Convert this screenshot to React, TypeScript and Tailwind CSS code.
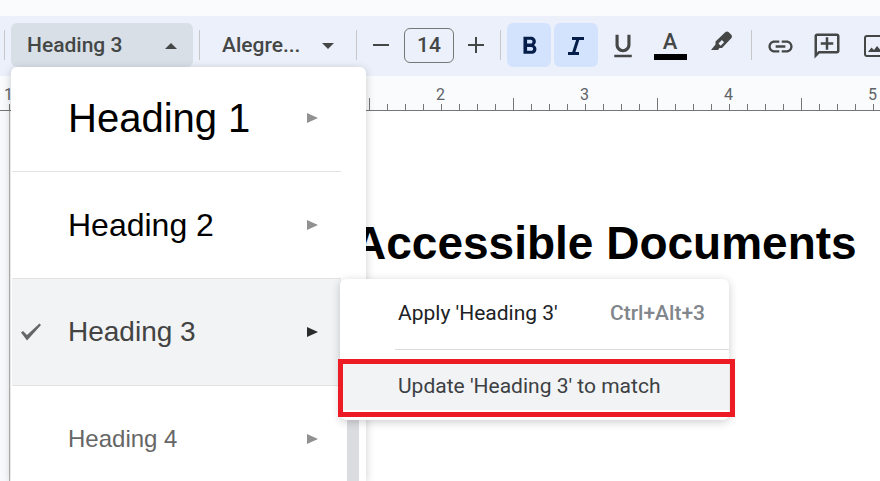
import React from "react";
import {
  MdFormatBold,
  MdFormatUnderlined,
  MdLink,
  MdOutlineAddComment,
} from "react-icons/md";

const headings = [
  { label: "Heading 1", text: "text-[40px] text-black", active: false },
  { label: "Heading 2", text: "text-[32px] text-black", active: false },
  { label: "Heading 3", text: "text-[28px] text-[#434343]", active: true },
  { label: "Heading 4", text: "text-[24px] text-[#666666]", active: false },
];

// Inch labels, counted from the left margin in both directions
const inches = ["1", "", "1", "2", "3", "4", "5"];

function Separator() {
  return <div className="h-[30px] w-px shrink-0 bg-[#c7c7c7]" />;
}

function Ruler() {
  return (
    <div className="h-[35px] overflow-hidden border-b border-[#747775] bg-[#f9fbfd]">
      <div className="flex h-[27px] items-end pl-1">
        {inches.map((n, i) => (
          <span
            key={i}
            className="w-36 shrink-0 text-base leading-4 text-[#5f6368]"
          >
            {n}
          </span>
        ))}
      </div>
      {/* Eighth-inch ticks, taller on the half inch */}
      <div className="-mt-[5px] flex h-3 items-end pl-[9px]">
        {Array.from({ length: 120 }, (_, i) => (
          <span
            key={i}
            className={
              i % 8 === 4
                ? "h-3 w-[18px] shrink-0 border-l border-[#747775]"
                : "h-1.5 w-[18px] shrink-0 border-l border-[#747775]"
            }
          />
        ))}
      </div>
    </div>
  );
}

function Toolbar() {
  return (
    <div className="flex h-[60px] items-center gap-1.5 overflow-hidden bg-[#ecf0fa] pb-0.5 pl-1 text-[#444746]">
      <Separator />
      <button
        type="button"
        aria-expanded="true"
        className="flex h-11 w-[182px] shrink-0 items-center justify-between rounded-md bg-[#d8dfe7] px-4 pt-0.5 text-[21px] font-medium"
      >
        Heading 3
        <svg width="12" height="6" viewBox="0 0 12 6" fill="currentColor">
          <path d="M6 0l6 6H0z" />
        </svg>
      </button>
      <Separator />
      <button
        type="button"
        className="flex h-11 w-36 shrink-0 items-center justify-between px-4 pt-0.5 text-[21px] font-medium"
      >
        Alegre...
        <svg width="12" height="6" viewBox="0 0 12 6" fill="currentColor">
          <path d="M0 0h12L6 6z" />
        </svg>
      </button>
      <Separator />
      <button
        type="button"
        aria-label="Decrease font size"
        className="flex h-11 w-[35px] shrink-0 items-center justify-center"
      >
        <svg width="16" height="16" viewBox="0 0 16 16" fill="currentColor">
          <path d="M0 7h16v2H0z" />
        </svg>
      </button>
      <input
        type="text"
        aria-label="Font size"
        defaultValue="14"
        className="h-[35px] w-[50px] shrink-0 rounded-md border border-[#747775] text-center text-[21px] font-medium"
      />
      <button
        type="button"
        aria-label="Increase font size"
        className="flex h-11 w-[34px] shrink-0 items-center pl-2"
      >
        <svg width="16" height="16" viewBox="0 0 16 16" fill="currentColor">
          <path d="M0 7h7V0h2v7h7v2H9v7H7V9H0z" />
        </svg>
      </button>
      <Separator />

      {/* Text style */}
      <div className="flex shrink-0 gap-[3px]">
        <button
          type="button"
          aria-label="Bold"
          className="flex size-11 items-center justify-center rounded-md bg-[#d3e3fd] pt-0.5 text-[#041e49]"
        >
          <MdFormatBold size={29} />
        </button>
        <button
          type="button"
          aria-label="Italic"
          className="flex size-11 items-center justify-center rounded-md bg-[#d3e3fd] pt-0.5 text-[#041e49]"
        >
          <svg
            width="18"
            height="18"
            viewBox="0 0 18 18"
            fill="none"
            stroke="currentColor"
            strokeWidth="3"
          >
            <path d="M5 1.500h12M1 16.500h11M11 2L6.500 16" />
          </svg>
        </button>
        <button
          type="button"
          aria-label="Underline"
          className="flex size-11 items-center justify-center pt-0.5"
        >
          <MdFormatUnderlined size={30} />
        </button>
        <button
          type="button"
          aria-label="Text color"
          className="flex size-11 flex-col items-center justify-center"
        >
          <span className="text-[22px] font-medium leading-6">A</span>
          <span className="h-1.5 w-[33px] bg-black" />
        </button>
        <button
          type="button"
          aria-label="Highlight color"
          className="flex h-11 w-[50px] items-center justify-center pb-2 pl-1"
        >
          <svg width="22" height="20" viewBox="0 0 22 20" fill="currentColor">
            <path
              fillRule="evenodd"
              d="M0 19l4.500-5.500V10.500L14.500 1Q16 0 17.500 1L20.500 4Q21.500 5.500 20.500 7L11 17H8.500L7 19zM7.500 12.600l2.200 2.200 3.400-3.600-2.200-2.200z"
            />
          </svg>
        </button>
      </div>
      <Separator />

      {/* Insert */}
      <div className="flex shrink-0 gap-[3px]">
        <button
          type="button"
          aria-label="Insert link"
          className="flex size-11 items-center justify-center pt-0.5"
        >
          <MdLink size={29} />
        </button>
        <button
          type="button"
          aria-label="Add comment"
          className="flex size-11 items-center justify-center pt-0.5"
        >
          <MdOutlineAddComment size={30} className="-scale-x-100" />
        </button>
        <button
          type="button"
          aria-label="Insert image"
          className="flex size-11 items-center justify-center pl-0.5 pt-0.5"
        >
          <svg width="22" height="22" viewBox="0 0 22 22">
            <rect
              x="1"
              y="1"
              width="20"
              height="20"
              rx="2"
              fill="none"
              stroke="currentColor"
              strokeWidth="2"
            />
            <path d="M4 17l3.500-4.500L10 15l3-4 5 6z" fill="currentColor" />
          </svg>
        </button>
      </div>
    </div>
  );
}

function HeadingMenu() {
  return (
    <div className="absolute bottom-0 left-[11px] top-[67px] flex w-[355px] overflow-hidden rounded-t-md bg-white pl-px shadow-[0_2px_10px_rgba(0,0,0,0.2)]">
      <ul className="-mt-0.5 w-[329px]">
        {headings.map((h) => (
          <li key={h.label}>
            <button
              type="button"
              className={
                h.active
                  ? "flex h-[107px] w-full items-center border-b border-[#e3e3e3] bg-[#f1f3f4] pl-2 pr-[23px] text-[#2b2b2b]"
                  : "flex h-[107px] w-full items-center border-b border-[#e3e3e3] pl-2 pr-[23px] text-[#919191]"
              }
            >
              <span className="w-12">
                {h.active && (
                  <svg width="22" height="18" viewBox="0 0 22 18" fill="#666666">
                    <path d="M1 9.500L3 8l4 4L19.500.5 21 2 7 17.500z" />
                  </svg>
                )}
              </span>
              <span
                className={`flex-1 text-left font-['Liberation_Sans',Arial,sans-serif] ${h.text}`}
              >
                {h.label}
              </span>
              <svg width="11" height="10" viewBox="0 0 11 10" fill="currentColor">
                <path d="M0 0l11 5-11 5z" />
              </svg>
            </button>
          </li>
        ))}
      </ul>
      <div className="ml-1.5 mt-[260px] w-3 bg-[#dadce0]" />
    </div>
  );
}

function HeadingSubmenu() {
  return (
    <div className="absolute left-[340px] top-[279px] w-[389px] rounded-md bg-white pb-2.5 pt-2 text-[21px] shadow-[0_2px_10px_rgba(0,0,0,0.2)]">
      <button
        type="button"
        className="flex h-[52px] w-full items-center justify-between pl-[58px] pr-6 pt-0.5 text-[#202124]"
      >
        Apply 'Heading 3'
        <span className="font-medium text-[#80868b]">Ctrl+Alt+3</span>
      </button>
      <div className="mb-3 ml-[55px] mt-2.5 h-px bg-[#dadce0]" />
      <button
        type="button"
        className="relative flex h-12 w-full items-center bg-[#f1f3f4] pl-[58px] pt-0.5 text-[#3c4043]"
      >
        Update 'Heading 3' to match
        <span className="pointer-events-none absolute -bottom-[7px] -left-0.5 -right-1.5 -top-[3px] border-[5px] border-[#ed1c24]" />
      </button>
    </div>
  );
}

export default function App() {
  return (
    <div className="relative flex min-h-screen flex-col overflow-hidden bg-white font-[Roboto,sans-serif]">
      <div className="h-4 bg-[#f9fbfd]" />
      <Toolbar />
      <Ruler />
      <main className="flex flex-1">
        <div className="w-2.5 shrink-0 border-r border-[#b5b5b5] bg-[#f8f9fc]" />
        <h1 className="whitespace-nowrap pl-[343px] pt-[106px] font-['Liberation_Sans',Arial,sans-serif] text-[46px] font-bold leading-[52px] text-black">
          Accessible Documents
        </h1>
      </main>
      <HeadingMenu />
      <HeadingSubmenu />
    </div>
  );
}
